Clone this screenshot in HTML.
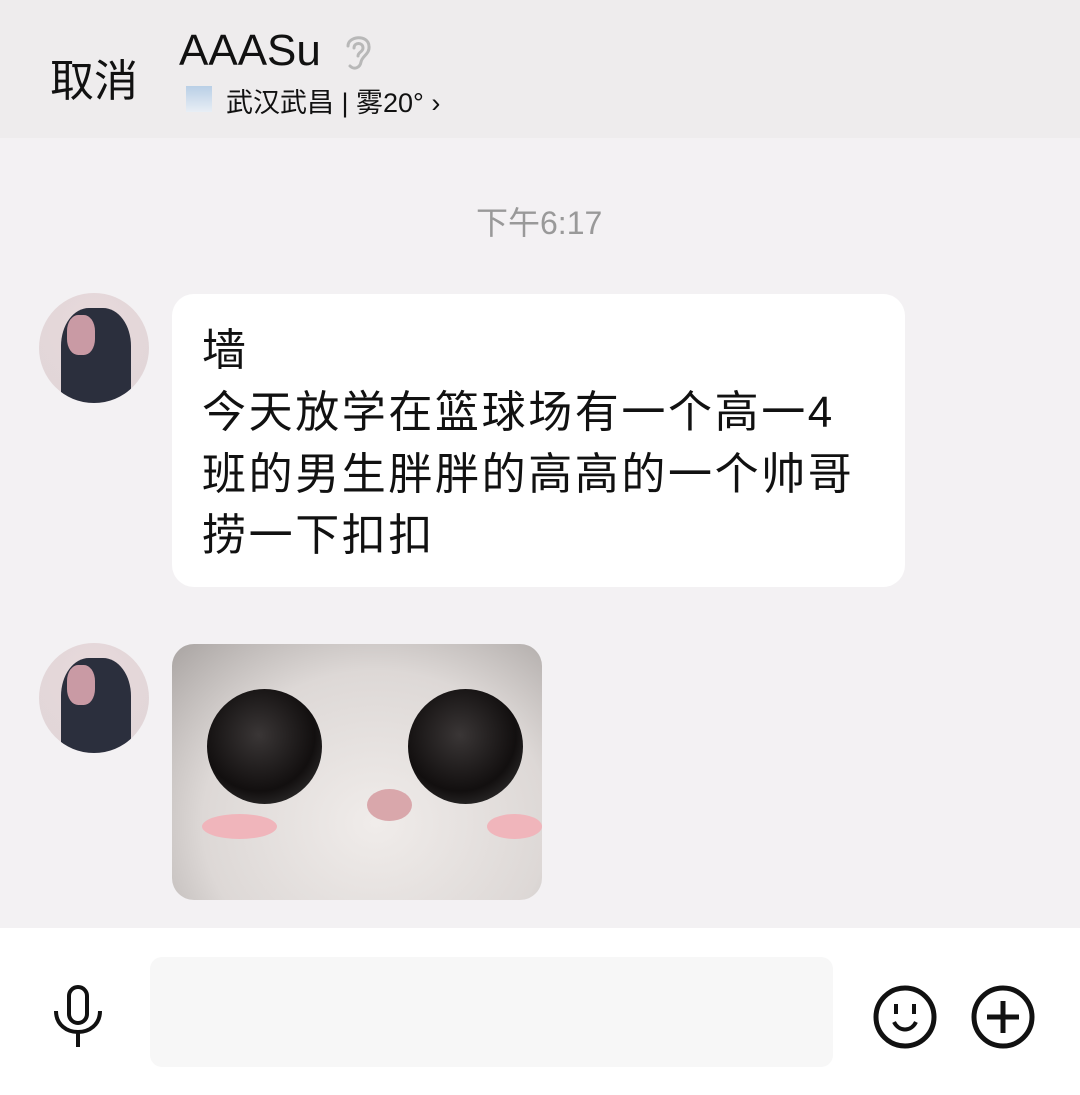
<!DOCTYPE html>
<html><head><meta charset="utf-8"><style>
body{margin:0;width:1080px;height:1095px;overflow:hidden;background:#f3f1f3;font-family:"Liberation Sans","Noto Sans CJK SC",sans-serif;position:relative}
.hdr{position:absolute;left:0;top:0;width:1080px;height:138px;background:#eeeced}
.abs{position:absolute}
.av{position:absolute;left:39px;width:110px;height:110px;border-radius:50%;background:radial-gradient(circle at 50% 30%,#e9d9dc 0,#e4d7d9 40%,#e0d6d8 100%);overflow:hidden}
.bubble{position:absolute;left:172px;top:294px;width:733px;height:293px;background:#fff;border-radius:22px}
.bubble div{position:absolute;left:30px;font-size:44px;letter-spacing:2.6px;color:#111;line-height:62px;white-space:nowrap}
.bot{position:absolute;left:0;top:928px;width:1080px;height:167px;background:#fff}
</style></head><body>
<div class="hdr">
 <div class="abs" style="left:50px;top:45px;font-size:44px;color:#111">取消</div>
 <div class="abs" style="left:179px;top:26px;font-size:44px;color:#111">AAASu</div>
 <svg class="abs" style="left:340px;top:30px" width="36" height="42" viewBox="0 0 36 42"><path d="M8 16 C8 6 28 4 29 16 C30 24 22 26 21 32 C20 38 14 40 10 36 M14 18 C14 12 23 12 23 18 C23 22 18 22 18 26" fill="none" stroke="#b8b8b8" stroke-width="3" stroke-linecap="round"/></svg>
 <div class="abs" style="left:186px;top:86px;width:26px;height:26px;background:linear-gradient(#b9cfe6,#e8eef5)"></div>
 <div class="abs" style="left:226px;top:81px;font-size:27px;color:#111">武汉武昌 | 雾20° ›</div>
</div>
<div class="abs" style="left:476px;top:198px;font-size:32px;color:#999">下午6:17</div>
<div class="av" style="top:293px"><div class="abs" style="left:22px;top:15px;width:70px;height:95px;background:#2b2f3d;border-radius:40% 40% 10% 10%"></div><div class="abs" style="left:28px;top:22px;width:28px;height:40px;background:#c99aa4;border-radius:40%"></div></div>
<div class="bubble">
 <div style="top:26px">墙</div>
 <div style="top:88px">今天放学在篮球场有一个高一4</div>
 <div style="top:150px">班的男生胖胖的高高的一个帅哥</div>
 <div style="top:211px">捞一下扣扣</div>
</div>
<div class="av" style="top:643px"><div class="abs" style="left:22px;top:15px;width:70px;height:95px;background:#2b2f3d;border-radius:40% 40% 10% 10%"></div><div class="abs" style="left:28px;top:22px;width:28px;height:40px;background:#c99aa4;border-radius:40%"></div></div>
<div class="abs" style="left:172px;top:644px;width:370px;height:256px;border-radius:22px;overflow:hidden;background:radial-gradient(ellipse at 55% 70%,#f0ecea 0,#ddd8d6 60%,#a9a4a2 100%)">
 <div class="abs" style="left:35px;top:45px;width:115px;height:115px;border-radius:50%;background:radial-gradient(circle at 45% 40%,#3a3636 0,#120f0f 60%,#444 100%)"></div>
 <div class="abs" style="left:236px;top:45px;width:115px;height:115px;border-radius:50%;background:radial-gradient(circle at 45% 40%,#3a3636 0,#120f0f 60%,#444 100%)"></div>
 <div class="abs" style="left:195px;top:145px;width:45px;height:32px;border-radius:50%;background:#d9a7ab"></div>
 <div class="abs" style="left:30px;top:170px;width:75px;height:25px;border-radius:50%;background:#f0b5bb"></div>
 <div class="abs" style="left:315px;top:170px;width:55px;height:25px;border-radius:50%;background:#f0b5bb"></div>
</div>
<div class="bot">
 <svg class="abs" style="left:50px;top:55px" width="56" height="66" viewBox="0 0 56 66"><rect x="19" y="4" width="18" height="36" rx="9" fill="none" stroke="#111" stroke-width="4"/><path d="M6 28 C6 56 50 56 50 28 M28 48 V64" fill="none" stroke="#111" stroke-width="4"/></svg>
 <div class="abs" style="left:150px;top:29px;width:683px;height:110px;background:#f7f7f7;border-radius:12px"></div>
 <svg class="abs" style="left:872px;top:56px" width="66" height="66" viewBox="0 0 66 66"><circle cx="33" cy="33" r="29" fill="none" stroke="#111" stroke-width="5"/><path d="M24 20v10M42 20v10M22 38c5 10 17 10 22 0" fill="none" stroke="#111" stroke-width="4"/></svg>
 <svg class="abs" style="left:970px;top:56px" width="66" height="66" viewBox="0 0 66 66"><circle cx="33" cy="33" r="29" fill="none" stroke="#111" stroke-width="5"/><path d="M33 17v32M17 33h32" stroke="#111" stroke-width="5"/></svg>
</div>
</body></html>
